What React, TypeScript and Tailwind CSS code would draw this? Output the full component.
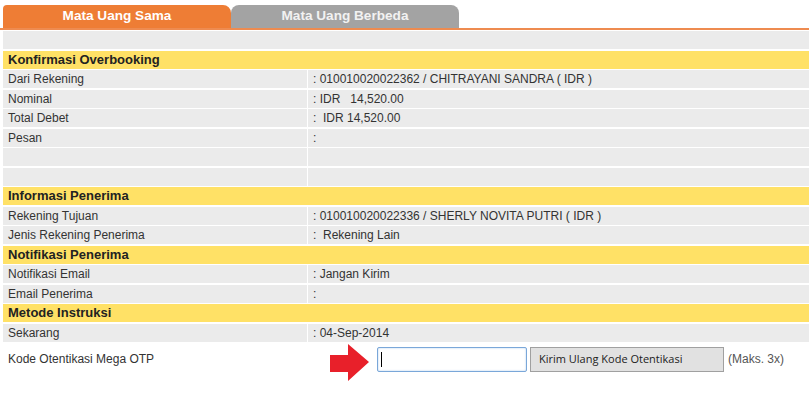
import React from "react";

type Row =
  | { kind: "header"; title: string }
  | { kind: "field"; label: string; value: string };

const rows: Row[] = [
  { kind: "header", title: "Konfirmasi Overbooking" },
  { kind: "field", label: "Dari Rekening", value: ": 010010020022362 / CHITRAYANI SANDRA ( IDR )" },
  { kind: "field", label: "Nominal", value: ": IDR\u00a0\u00a0 14,520.00" },
  { kind: "field", label: "Total Debet", value: ":\u00a0 IDR 14,520.00" },
  { kind: "field", label: "Pesan", value: ":" },
  { kind: "field", label: "", value: "" },
  { kind: "field", label: "", value: "" },
  { kind: "header", title: "Informasi Penerima" },
  { kind: "field", label: "Rekening Tujuan", value: ": 010010020022336 / SHERLY NOVITA PUTRI ( IDR )" },
  { kind: "field", label: "Jenis Rekening Penerima", value: ":\u00a0 Rekening Lain" },
  { kind: "header", title: "Notifikasi Penerima" },
  { kind: "field", label: "Notifikasi Email", value: ": Jangan Kirim" },
  { kind: "field", label: "Email Penerima", value: ":" },
  { kind: "header", title: "Metode Instruksi" },
  { kind: "field", label: "Sekarang", value: ": 04-Sep-2014" },
];

export default function App() {
  return (
    <div className="w-[809px] h-[396px] bg-white overflow-hidden font-['Liberation_Sans',Arial,sans-serif] text-[12px] text-[#333]">
      {/* tabs */}
      <div className="flex pl-[3px] pt-[5px]">
        <div className="w-[228px] h-[23px] bg-[#EE7D35] rounded-tl-[4px] rounded-tr-[8px] flex items-center justify-center text-white font-bold text-[13.6px]">
          Mata Uang Sama
        </div>
        <div className="w-[228px] h-[23px] bg-[#A3A3A3] rounded-tl-[8px] rounded-tr-[8px] flex items-center justify-center text-[#F2F2F2] font-bold text-[13.6px]">
          Mata Uang Berbeda
        </div>
      </div>
      <div className="h-[2px] bg-[#EE8B50]" />

      {/* table */}
      <div className="ml-[3px] mt-[1px] flex flex-col gap-[1.5px]">
        <div className="h-[18px] bg-[#EBEBEB]" />
        {rows.map((row, i) =>
          row.kind === "header" ? (
            <div
              key={i}
              className="h-[18px] bg-[#FFE166] flex items-center pl-[5px] font-bold text-[13px] text-[#222]"
            >
              {row.title}
            </div>
          ) : (
            <div key={i} className="h-[18px] grid grid-cols-[304px_1fr] gap-x-[1px]">
              <div className="bg-[#EBEBEB] flex items-center pl-[5px] whitespace-pre">{row.label}</div>
              <div className="bg-[#EBEBEB] flex items-center pl-[5px] whitespace-pre">{row.value}</div>
            </div>
          )
        )}
      </div>

      {/* OTP */}
      <div className="flex items-start mt-[2px] pl-[8px]">
        <div className="w-[299px] mt-[8px] leading-[14px]">Kode Otentikasi Mega OTP</div>
        <svg width="40" height="38" viewBox="0 0 40 38" className="ml-[23px]">
          <polygon points="0,11 18,11 18,0 39,18 18,37 18,28 0,28" fill="#E8202A" />
        </svg>
        <div className="relative ml-[7px] mt-[3px]">
          <input
            type="text"
            className="w-[150px] h-[25px] border border-[#7AA7D9] rounded-[2px] shadow-[inset_0_0_2px_#A9C8EA] outline-none bg-white"
          />
          <span className="absolute left-[4px] top-[5px] w-px h-[15px] bg-black" />
        </div>
        <button className="ml-[3px] mt-[3px] w-[194px] h-[25px] bg-[#E1E1E1] border border-[#A0A0A0] text-left pl-[8px] text-[11px] text-[#222] font-['Open_Sans',sans-serif]">
          Kirim Ulang Kode Otentikasi
        </button>
        <div className="ml-[4px] mt-[8px] leading-[14px] text-[#555]">(Maks. 3x)</div>
      </div>
    </div>
  );
}
